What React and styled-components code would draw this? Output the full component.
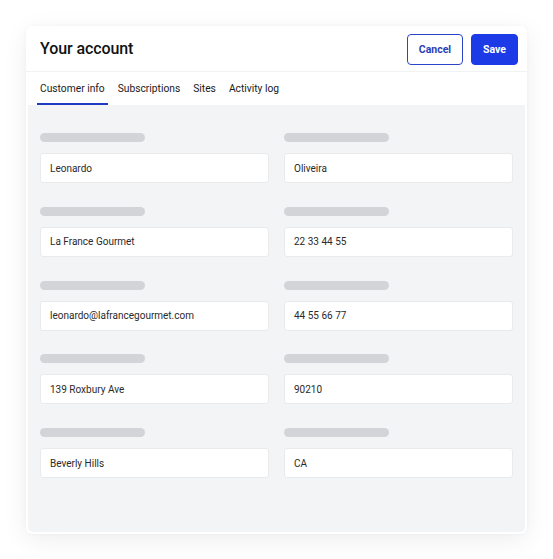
import React from 'react'
import styled, { createGlobalStyle } from 'styled-components'

const fields = [
   { id: 1, value: 'Leonardo' },
   { id: 2, value: 'Oliveira' },
   { id: 3, value: 'La France Gourmet' },
   { id: 4, value: '22 33 44 55' },
   { id: 5, value: 'leonardo@lafrancegourmet.com' },
   { id: 6, value: '44 55 66 77' },
   { id: 7, value: '139 Roxbury Ave' },
   { id: 8, value: '90210' },
   { id: 9, value: 'Beverly Hills' },
   { id: 10, value: 'CA' },
]

const tabs = ['Customer info', 'Subscriptions', 'Sites', 'Activity log']

const App = () => {
   return (
      <Page>
         <GlobalStyle />
         <Card>
            <Header>
               <Title>Your account</Title>
               <Actions>
                  <Button>Cancel</Button>
                  <Button primary>Save</Button>
               </Actions>
            </Header>
            <TabBar>
               {tabs.map((tab, i) => (
                  <Tab key={tab} active={i === 0}>
                     {tab}
                  </Tab>
               ))}
            </TabBar>
            <Panel>
               <FieldGrid>
                  {fields.map((field) => (
                     <Field key={field.id}>
                        <LabelBar />
                        <Input>{field.value}</Input>
                     </Field>
                  ))}
               </FieldGrid>
            </Panel>
         </Card>
      </Page>
   )
}

export default App

const GlobalStyle = createGlobalStyle`
   body {
      margin: 0;
      background: #fff;
      font-family: Roboto, 'Liberation Sans', sans-serif;
   }
`

const Page = styled.div`
   padding: 26px 0 0 26px;
   width: 553px;
   height: 559px;
   box-sizing: border-box;
`

const Card = styled.div`
   width: 501px;
   background: #fff;
   border-radius: 6px;
   box-shadow: 0 6px 26px rgba(0, 0, 0, 0.07), 0 0 5px rgba(0, 0, 0, 0.03);
   padding-bottom: 2px;
`

const Header = styled.div`
   height: 45px;
   display: flex;
   align-items: center;
   justify-content: space-between;
   padding: 0 9px 0 14px;
   border-bottom: 1px solid #f1f2f3;
`

const Title = styled.h1`
   margin: 0;
   font-size: 16px;
   font-weight: 500;
   color: #111;
   letter-spacing: -0.1px;
`

const Actions = styled.div`
   display: flex;
   gap: 8px;
   margin-top: 2px;
`

const Button = styled.button`
   height: 31px;
   padding: 0;
   width: ${(p) => (p.primary ? '47px' : '56px')};
   border-radius: 4px;
   border: 1.5px solid ${(p) => (p.primary ? '#1c3ae6' : '#2b45c9')};
   background: ${(p) => (p.primary ? '#1c3ae6' : '#fff')};
   color: ${(p) => (p.primary ? '#fff' : '#2b3fb8')};
   font-family: Roboto, sans-serif;
   font-size: 10.5px;
   font-weight: 700;
`

const TabBar = styled.div`
   display: flex;
   gap: 7px;
   padding: 0 11px;
   height: 33px;
`

const Tab = styled.div`
   display: flex;
   align-items: center;
   padding: 2px 3px 0;
   font-size: 10.25px;
   color: #1a1a1a;
   border-bottom: 2px solid ${(p) => (p.active ? '#1f3bc4' : 'transparent')};
   box-sizing: border-box;
`

const Panel = styled.div`
   margin: 0 2px;
   background: #f3f4f6;
   border-radius: 0 0 5px 5px;
   padding: 28px 11px 54px 12px;
`

const FieldGrid = styled.div`
   display: grid;
   grid-template-columns: 229px 229px;
   column-gap: 15px;
   row-gap: 23.75px;
`

const Field = styled.div`
   display: flex;
   flex-direction: column;
`

const LabelBar = styled.div`
   width: 105px;
   height: 9px;
   border-radius: 5px;
   background: #d2d4d7;
   margin-bottom: 11px;
`

const Input = styled.div`
   height: 30px;
   box-sizing: border-box;
   background: #fff;
   border: 1px solid #e9eaec;
   border-radius: 3px;
   display: flex;
   align-items: center;
   padding: 0 9px;
   font-size: 10px;
   color: #2a2a2a;
`
